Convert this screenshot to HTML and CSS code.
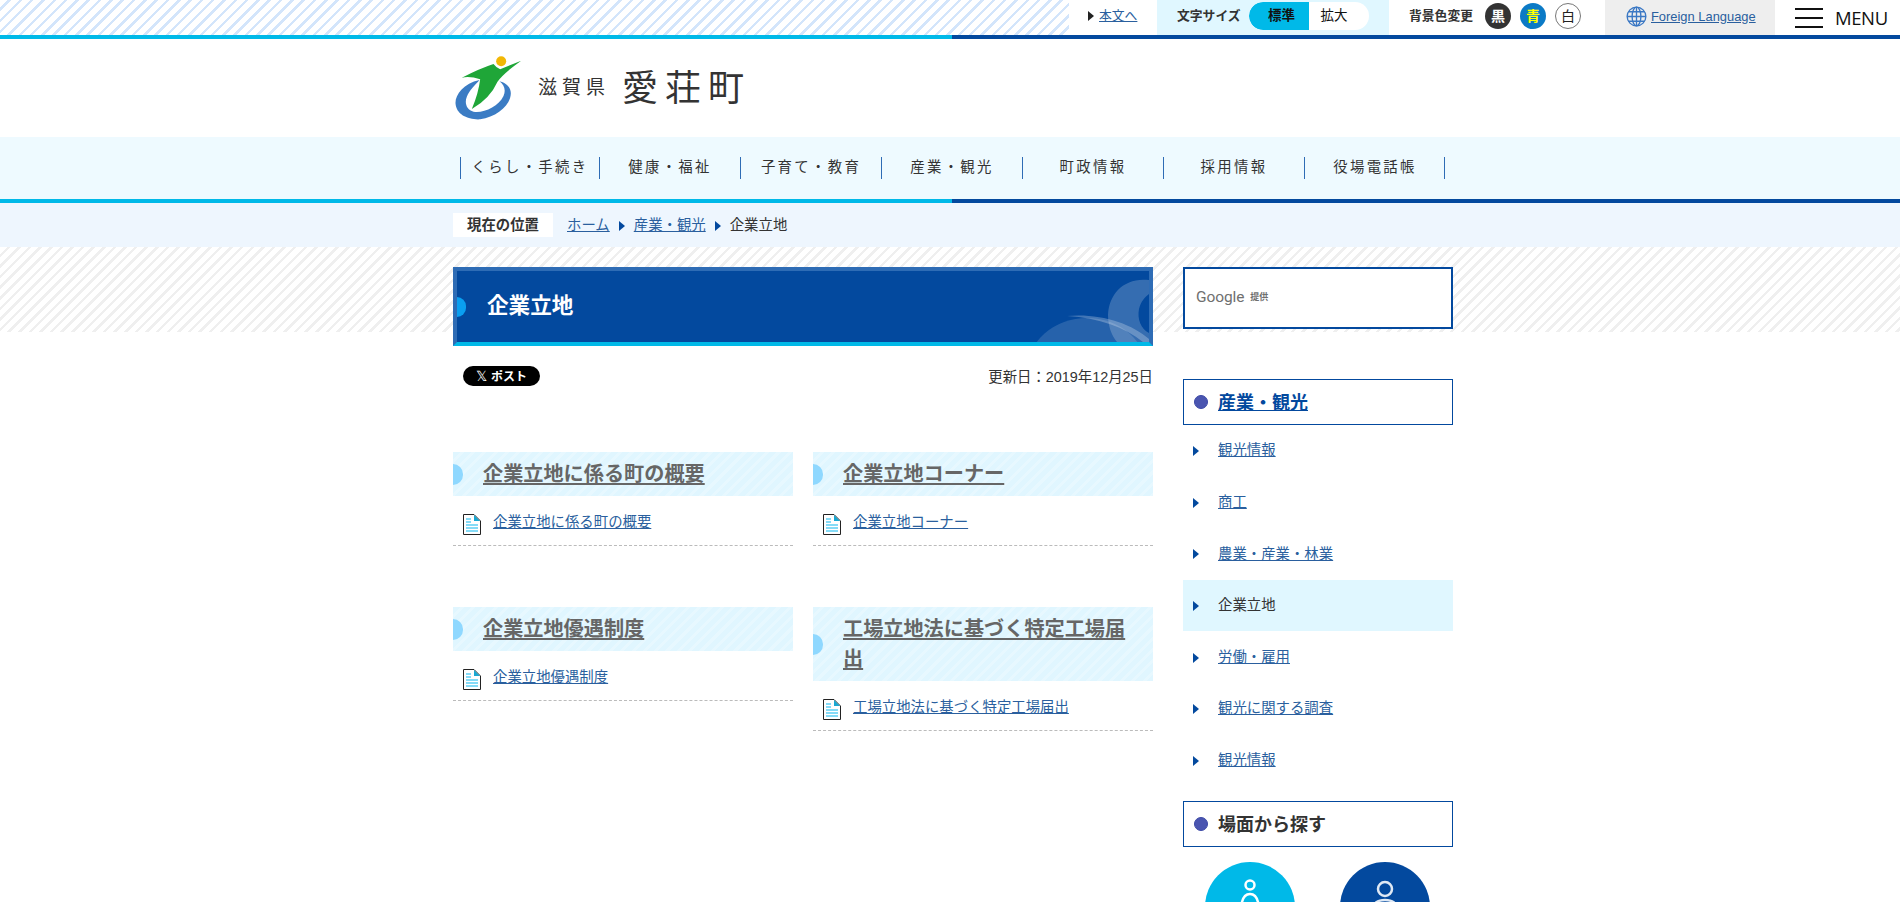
FILE: index.html
```html
<!DOCTYPE html>
<html lang="ja">
<head>
<meta charset="utf-8">
<title>企業立地 | 滋賀県愛荘町</title>
<link rel="stylesheet" href="styles.css">
</head>
<body>
<div class="topbar">
  <div class="top-hatch"></div>
  <div class="top-skip"><span class="tri tri-dark"></span><a href="#main">本文へ</a></div>
  <div class="top-size">
    <span class="top-label">文字サイズ</span>
    <div class="pill"><span class="pill-on">標準</span><span class="pill-off">拡大</span></div>
  </div>
  <div class="top-color">
    <span class="top-label">背景色変更</span>
    <span class="dot dot-black">黒</span><span class="dot dot-blue">青</span><span class="dot dot-white">白</span>
  </div>
  <div class="top-lang">
    <svg class="globe" viewBox="0 0 22 22" width="21" height="21" fill="none" stroke="#3b78c4" stroke-width="1.4"><circle cx="11" cy="11" r="9.8"/><ellipse cx="11" cy="11" rx="4.6" ry="9.8"/><path d="M11 1.2v19.6M1.2 11h19.6M2.6 6h16.8M2.6 16h16.8"/></svg>
    <a href="#lang">Foreign Language</a>
  </div>
  <div class="top-menu">
    <span class="burger"><i></i><i></i><i></i></span>
    <span class="menu-text">MENU</span>
  </div>
</div>
<div class="rule"></div>

<header class="site-head">
  <svg class="logo" viewBox="45 48 200 195" width="67" height="65">
    <path fill="#3b7cc4" d="M118 120C70 130 45 165 46 190C48 225 85 240 120 238C170 232 212 195 212 160C212 140 195 128 178 124C192 135 198 150 190 168C175 200 130 220 100 215C80 210 72 190 80 170C88 150 105 135 118 120Z"/>
    <path fill="#1fa638" d="M65 113Q120 85 160 72Q170 85 180 88L243 62Q190 100 172 125Q150 175 95 207Q115 160 120 118Q90 108 65 113Z"/>
    <circle cx="183" cy="64" r="15" fill="#f2b705"/>
  </svg>
  <span class="pref">滋賀県</span>
  <span class="town">愛荘町</span>
</header>

<nav class="gnav">
  <ul class="gnav-list">
    <li>くらし・手続き</li>
    <li>健康・福祉</li>
    <li>子育て・教育</li>
    <li>産業・観光</li>
    <li>町政情報</li>
    <li>採用情報</li>
    <li>役場電話帳</li>
  </ul>
</nav>
<div class="rule"></div>

<div class="crumbs">
  <div class="crumbs-in">
    <span class="crumb-label">現在の位置</span>
    <a href="#home">ホーム</a><span class="tri tri-navy"></span>
    <a href="#sangyo">産業・観光</a><span class="tri tri-navy"></span>
    <span>企業立地</span>
  </div>
</div>

<main class="page" id="main">
  <div class="page-in">
    <div class="col-main">
      <div class="title">
        <svg class="title-deco" viewBox="0 0 130 71" width="130" height="71">
          <ellipse cx="68" cy="100" rx="60" ry="53" fill="#fff" fill-opacity=".14"/>
          <path fill="#fff" fill-opacity=".2" d="M130 9C106 6 90 22 89 44C89 54 92 64 98 71H130V62C122 58 118 48 120 38C122 30 126 26 130 23Z"/>
          <path fill="#fff" fill-opacity=".25" d="M48 45C80 42 112 52 130 68V71H124C106 56 80 47 48 45Z"/>
        </svg>
        <h1>企業立地</h1>
      </div>
      <div class="meta">
        <span class="post"><span class="post-x">𝕏</span>ポスト</span>
        <span class="date">更新日：2019年12月25日</span>
      </div>
      <div class="cards">
        <section class="card">
          <h2><a href="#a">企業立地に係る町の概要</a></h2>
          <div class="doc">
            <svg class="doc-ico" viewBox="0 0 18 21" width="18" height="21"><use href="#docicon"/></svg>
            <a href="#a1">企業立地に係る町の概要</a>
          </div>
        </section>
        <section class="card">
          <h2><a href="#b">企業立地コーナー</a></h2>
          <div class="doc">
            <svg class="doc-ico" viewBox="0 0 18 21" width="18" height="21"><use href="#docicon"/></svg>
            <a href="#b1">企業立地コーナー</a>
          </div>
        </section>
        <section class="card">
          <h2><a href="#c">企業立地優遇制度</a></h2>
          <div class="doc">
            <svg class="doc-ico" viewBox="0 0 18 21" width="18" height="21"><use href="#docicon"/></svg>
            <a href="#c1">企業立地優遇制度</a>
          </div>
        </section>
        <section class="card">
          <h2><a href="#d">工場立地法に基づく特定工場届出</a></h2>
          <div class="doc">
            <svg class="doc-ico" viewBox="0 0 18 21" width="18" height="21"><use href="#docicon"/></svg>
            <a href="#d1">工場立地法に基づく特定工場届出</a>
          </div>
        </section>
      </div>
    </div>

    <aside class="col-side">
      <div class="search"><span class="g-word">Google</span><span class="g-by">提供</span></div>
      <div class="side-title side-first"><span class="ball"></span><a href="#sangyo">産業・観光</a></div>
      <ul class="side-list">
        <li><span class="tri tri-navy"></span><a href="#s1">観光情報</a></li>
        <li><span class="tri tri-navy"></span><a href="#s2">商工</a></li>
        <li><span class="tri tri-navy"></span><a href="#s3">農業・産業・林業</a></li>
        <li class="is-current"><span class="tri tri-navy"></span><span>企業立地</span></li>
        <li><span class="tri tri-navy"></span><a href="#s5">労働・雇用</a></li>
        <li><span class="tri tri-navy"></span><a href="#s6">観光に関する調査</a></li>
        <li><span class="tri tri-navy"></span><a href="#s7">観光情報</a></li>
      </ul>
      <div class="side-title"><span class="ball"></span><span>場面から探す</span></div>
      <div class="scenes">
        <div class="scene scene-cyan">
          <svg viewBox="0 0 90 90" width="90" height="90" fill="none" stroke="#fff" stroke-width="2.5"><circle cx="45" cy="23" r="4.5"/><path d="M36 50C36 36 40 32 45 32C50 32 54 36 54 50"/></svg>
        </div>
        <div class="scene scene-navy">
          <svg viewBox="0 0 90 90" width="90" height="90" fill="none" stroke="#dfe9f5" stroke-width="2.5"><circle cx="45" cy="27" r="7"/><path d="M33 50C33 40 38 38 45 38C52 38 57 40 57 50"/></svg>
        </div>
      </div>
    </aside>
  </div>
</main>

<svg class="defs" width="0" height="0">
  <symbol id="docicon" viewBox="0 0 18 21">
    <path d="M.5.5H11L17.500 7V20.500H.5Z" fill="#fff" stroke="#222"/>
    <path d="M11 1L17 7H11Z" fill="#19a9d3"/>
    <path d="M3 5h5M3 8h5M3 11h12M3 14h12M3 17h12" stroke="#5ed0f5" stroke-width="1.300"/>
  </symbol>
</svg>
</body>
</html>
```
FILE: styles.css
```css
* { box-sizing: border-box; }
html, body { margin: 0; padding: 0; height: 902px; overflow: hidden; }
body {
  background: #fff;
  color: #333;
  font-family: "Liberation Sans", "Noto Sans CJK JP", sans-serif;
  font-size: 14.4px;
  line-height: 1.5;
}
a { color: #2a5f9e; text-decoration: underline; }
ul { list-style: none; margin: 0; padding: 0; }
h1, h2 { margin: 0; }

.tri { display: inline-block; flex: none; width: 0; height: 0; border-style: solid; border-width: 5px 0 5px 6px; border-color: transparent; }
.tri-dark { border-left-color: #222; }
.tri-navy { border-left-color: #03499e; }

.topbar { display: flex; height: 35px; }
.top-hatch {
  width: 1069px;
  background: repeating-linear-gradient(135deg, #fff 0, #fff 5.500px, #d3e5fb 5.500px, #d3e5fb 8px);
}
.top-skip { width: 88px; display: flex; align-items: center; padding: 0 0 4px 19px; gap: 5px; font-size: 12.8px; }
.top-size { width: 232px; background: #e0f7ff; display: flex; align-items: center; padding: 0 0 3px 20px; gap: 8px; }
.top-label { font-size: 12.8px; font-weight: 700; color: #333; }
.pill { display: flex; height: 28px; width: 120px; border-radius: 14px; background: #fff; overflow: hidden; font-size: 13.500px; line-height: 28px; color: #111; text-align: center; }
.pill-on { width: 60px; padding-left: 6px; background: #00b9e8; font-weight: 700; border-radius: 14px 0 0 14px; }
.pill-off { width: 60px; padding-right: 9px; }
.top-color { width: 216px; display: flex; align-items: center; padding: 0 0 4px 20px; gap: 9px; }
.top-color .top-label { margin-right: 3px; }
.dot { width: 26px; height: 26px; border-radius: 50%; font-size: 14px; font-weight: 700; line-height: 26px; text-align: center; }
.dot-black { background: #333; color: #fff; }
.dot-blue { background: #0b7ac6; color: #ff0; }
.dot-white { background: #fff; color: #222; border: 1px solid #777; line-height: 24px; font-weight: 400; }
.top-lang { width: 170px; background: #eee; display: flex; align-items: center; padding: 0 0 2px 21px; gap: 4px; font-size: 12.900px; }
.globe { flex: none; }
.top-menu { flex: 1; display: flex; align-items: center; padding-left: 20px; gap: 12px; }
.burger { width: 28px; height: 20px; display: flex; flex-direction: column; justify-content: space-between; }
.burger i { display: block; height: 2px; background: #111; }
.menu-text { font-family: "Open Sans", sans-serif; font-weight: 400; font-size: 18.500px; color: #111; letter-spacing: -.4px; }

.rule { height: 4px; background: linear-gradient(90deg, #00b9e8 952px, #03499e 952px); }

.site-head { height: 98px; margin-left: 455px; display: flex; align-items: center; padding-top: 1px; }
.logo { flex: none; }
.pref { margin-left: 16px; font-size: 19px; letter-spacing: 5px; color: #333; }
.town { margin-left: 12px; font-size: 36px; letter-spacing: 7px; color: #333; line-height: 1; }

.gnav { height: 62px; background: #eefaff; display: flex; align-items: center; }
.gnav-list { margin-left: 460px; width: 985px; display: grid; grid-template-columns: 139px repeat(6, 141px); border-right: 1px solid #2e6cb5; }
.gnav-list li { height: 22px; line-height: 21px; border-left: 1px solid #2e6cb5; text-align: center; letter-spacing: 2.300px; color: #333; }

.crumbs { height: 44px; background: #eef6fe; display: flex; align-items: center; padding-top: 1px; }
.crumbs-in { margin-left: 453px; display: flex; align-items: center; gap: 9px; }
.crumb-label { width: 100px; height: 24px; margin: -1px 5px 0 0; background: #fff; font-weight: 700; font-size: 14.4px; line-height: 24px; text-align: center; }

.page {
  background-image: repeating-linear-gradient(135deg, #fff 0, #fff 5px, #efefef 5px, #efefef 7.500px);
  background-size: 100% 85px;
  background-repeat: no-repeat;
}
.page-in { margin-left: 453px; width: 1000px; padding-top: 20px; display: flex; gap: 30px; }
.col-main { width: 700px; flex: none; }
.col-side { width: 270px; flex: none; }

.title { position: relative; height: 79px; background: #03499e; border: 4px solid #2e6cb5; border-bottom-color: #00b9e8; display: flex; align-items: center; padding-left: 30px; overflow: hidden; }
.title::before { content: ""; position: absolute; left: 0; top: 26px; width: 9px; height: 20px; border-radius: 0 10px 10px 0; background: #0a9ff0; }
.title-deco { position: absolute; right: 0; bottom: 0; }
.title h1 { position: relative; font-size: 21.6px; font-weight: 700; color: #fff; line-height: 1.4; }

.meta { display: flex; justify-content: space-between; align-items: flex-start; padding: 20px 0 0 10px; height: 106px; }
.post { width: 77px; height: 20px; border-radius: 10px; background: #000; color: #fff; font-size: 12px; font-weight: 700; line-height: 20px; text-align: center; }
.post-x { font-weight: 400; font-size: 14px; margin-right: 4px; }
.date { padding-top: 1px; }

.cards { display: grid; grid-template-columns: 340px 340px; column-gap: 20px; row-gap: 61px; align-items: start; }
.card h2 {
  position: relative;
  padding: 7px 20px 7px 30px;
  font-size: 20.160px;
  font-weight: 700;
  line-height: 30px;
  background: repeating-linear-gradient(135deg, #e0f6ff 0, #e0f6ff 5px, #e7f8ff 5px, #e7f8ff 8px);
}
.card h2::before { content: ""; position: absolute; left: 0; top: 50%; margin-top: -10px; width: 10px; height: 21px; border-radius: 0 11px 11px 0; background: #8fd8ff; }
.card h2 a { color: #666; }
.doc { display: flex; gap: 12px; padding: 18px 0 10px 10px; border-bottom: 1px dashed #bbb; line-height: 16px; }
.doc-ico { flex: none; }
.defs { position: absolute; }

.search { height: 62px; border: 2px solid #03499e; background: #fff; display: flex; align-items: center; padding: 0 0 0 11px; gap: 6px; color: #6f6f6f; }
.g-word { font-family: Roboto, sans-serif; font-size: 15.500px; letter-spacing: -.1px; }
.g-by { font-size: 9px; font-weight: 700; }

.side-title { height: 46px; border: 1px solid #03499e; background: #fff; display: flex; align-items: center; padding: 2px 0 0 10px; gap: 10px; font-size: 18px; font-weight: 700; color: #333; }
.side-first { margin-top: 50px; }
.side-title a { color: #03499e; }
.ball { width: 14px; height: 14px; margin-top: -2px; border-radius: 50%; background: #4a55b0; border: 1px solid #3c49a6; flex: none; }
.side-list { margin-bottom: 15px; }
.side-list li { height: 51.600px; padding: 1px 0 0 10px; display: flex; align-items: center; gap: 19px; }
.side-list .is-current { background: #e0f7ff; }

.scenes { display: flex; gap: 45px; padding: 15px 0 0 22px; }
.scene { width: 90px; height: 90px; border-radius: 50%; flex: none; }
.scene-cyan { background: #00b9e8; }
.scene-navy { background: #03499e; }
```
